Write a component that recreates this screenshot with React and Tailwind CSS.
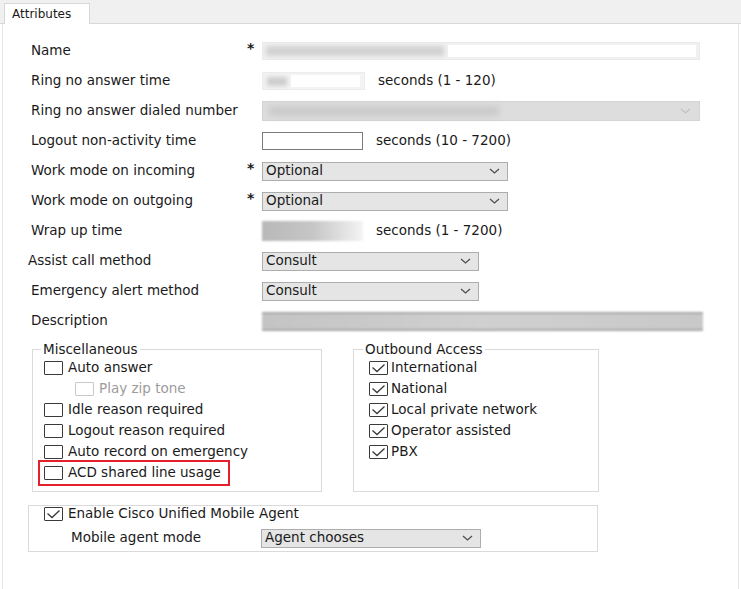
import React from "react";

const font = { fontFamily: '"DejaVu Sans", Verdana, sans-serif' };

function Chevron({ color = "#4f4f4f" }) {
  return (
    <svg width="11" height="6" viewBox="0 0 11 6" fill="none">
      <polyline points="1,1 5.5,5 10,1" stroke={color} strokeWidth="1.3" />
    </svg>
  );
}

function Select({ width, text }) {
  return (
    <div
      className="h-[19px] bg-[#e5e5e5] border border-[#adadad] flex items-center justify-between pl-[3px] pr-[7px]"
      style={{ width }}
    >
      <span className="leading-none">{text}</span>
      <Chevron />
    </div>
  );
}

function Checkbox({ checked, disabled }) {
  return (
    <span
      className={
        "w-[19px] h-[14px] shrink-0 border rounded-[1px] bg-white flex items-center justify-center " +
        (disabled ? "border-[#c9c9c9]" : "border-[#3a3a3a]")
      }
    >
      {checked && (
        <svg width="15" height="10" viewBox="0 0 15 10" fill="none">
          <polyline points="1.5,4.5 6,8.5 13.5,1.5" stroke="#3a3a3a" strokeWidth="1.3" />
        </svg>
      )}
    </span>
  );
}

function CheckRow({ label, checked, disabled, className = "", gap = "gap-[5px]" }) {
  return (
    <div className={"h-[21px] flex items-center " + gap + " " + className}>
      <Checkbox checked={checked} disabled={disabled} />
      <span className={"leading-none whitespace-nowrap " + (disabled ? "text-[#9b9b9b]" : "")}>{label}</span>
    </div>
  );
}

function Row({ label, star, children, labelClass = "" }) {
  return (
    <div className="h-[30px] flex items-center">
      <div className={"w-[215px] shrink-0 whitespace-nowrap leading-none " + labelClass}>{label}</div>
      <div className="w-[16px] shrink-0 pl-[1px] font-bold text-[14px] leading-none relative -top-[3px]">
        {star ? "*" : ""}
      </div>
      {children}
    </div>
  );
}

function Suffix({ children }) {
  return <span className="ml-[13px] leading-none whitespace-nowrap">{children}</span>;
}

export default function App() {
  return (
    <div
      className="w-[741px] h-[589px] bg-white overflow-hidden flex flex-col text-[13.5px] text-[#1a1a1a]"
      style={font}
    >
      {/* tab strip */}
      <div className="h-[24px] shrink-0 bg-[#f0f0f0] border-b border-[#d8d8d8] flex items-end pl-[4px]">
        <div className="h-[21px] w-[86px] bg-white border border-b-0 border-[#d8d8d8] -mb-px pl-[7px] flex items-center text-[12px] leading-none">
          Attributes
        </div>
      </div>

      <div className="flex-1 mx-[2px] border-x border-[#e6e6e6]">
        <div className="pt-[12px] pl-[28px]">
          <Row label="Name" star>
            <div className="w-[438px] h-[18px] bg-[#f1f1f1] border border-[#ebebeb] flex items-center pl-[3px] pr-[3px] gap-[4px]">
              <div className="w-[178px] h-[10px] bg-[#d2d2d2] blur-[2px]" />
              <div className="flex-1 h-[12px] bg-white" />
            </div>
          </Row>
          <Row label="Ring no answer time">
            <div className="w-[103px] h-[18px] bg-[#f3f3f3] border border-[#ececec] flex items-center pl-[4px] pr-[4px] gap-[4px]">
              <div className="w-[20px] h-[9px] bg-[#cdcdcd] blur-[2px]" />
              <div className="flex-1 h-[12px] bg-white" />
            </div>
            <Suffix>seconds (1 - 120)</Suffix>
          </Row>
          <Row label="Ring no answer dialed number">
            <div className="w-[438px] h-[20px] bg-[#dddddd] border border-[#d4d4d4] flex items-center justify-between pl-[6px] pr-[8px]">
              <div className="w-[230px] h-[10px] bg-[#cacaca] blur-[3px]" />
              <Chevron color="#c2c2c2" />
            </div>
          </Row>
          <Row label="Logout non-activity time">
            <div className="w-[101px] h-[18px] bg-white border border-[#7a7a7a]" />
            <Suffix>seconds (10 - 7200)</Suffix>
          </Row>
          <Row label="Work mode on incoming" star>
            <Select width={246} text="Optional" />
          </Row>
          <Row label="Work mode on outgoing" star>
            <Select width={246} text="Optional" />
          </Row>
          <Row label="Wrap up time">
            <div className="w-[101px] h-[20px] bg-gradient-to-r from-[#b8b8b8] via-[#c6c6c6] to-[#f4f4f4] blur-[1px]" />
            <Suffix>seconds (1 - 7200)</Suffix>
          </Row>
          <Row label="Assist call method" labelClass="-ml-[3px] mr-[3px]">
            <Select width={217} text="Consult" />
          </Row>
          <Row label="Emergency alert method">
            <Select width={217} text="Consult" />
          </Row>
          <Row label="Description">
            <div className="w-[441px] h-[19px] bg-gradient-to-r from-[#c4c4c4] via-[#d0d0d0] to-[#c9c9c9] border-y-2 border-[#a9a9a9] blur-[1px]" />
          </Row>
        </div>

        {/* group boxes */}
        <div className="flex mt-[5px] ml-[29px] gap-[31px]">
          <fieldset className="w-[290px] h-[151px] border border-[#dadada]">
            <legend className="ml-[8px] px-[2px] leading-[16px]">Miscellaneous</legend>
            <div className="pl-[11px]">
              <CheckRow label="Auto answer" />
              <CheckRow label="Play zip tone" disabled className="ml-[31px] gap-[4px]" />
              <CheckRow label="Idle reason required" />
              <CheckRow label="Logout reason required" />
              <CheckRow label="Auto record on emergency" />
              <div className="relative">
                <CheckRow label="ACD shared line usage" />
                <div className="absolute -left-[6px] -top-[2px] w-[192px] h-[26px] border-2 border-[#e3202b]" />
              </div>
            </div>
          </fieldset>
          <fieldset className="w-[246px] h-[151px] border border-[#dadada]">
            <legend className="ml-[9px] px-[2px] leading-[16px]">Outbound Access</legend>
            <div className="pl-[15px]">
              <CheckRow label="International" checked gap="gap-[3px]" />
              <CheckRow label="National" checked gap="gap-[3px]" />
              <CheckRow label="Local private network" checked gap="gap-[3px]" />
              <CheckRow label="Operator assisted" checked gap="gap-[3px]" />
              <CheckRow label="PBX" checked gap="gap-[3px]" />
            </div>
          </fieldset>
        </div>

        {/* mobile agent */}
        <div className="mt-[13px] ml-[25px] w-[570px] h-[47px] border border-[#dadada] pl-[15px]">
          <div className="h-[16px] flex items-center gap-[5px]">
            <Checkbox checked />
            <span className="leading-none">Enable Cisco Unified Mobile Agent</span>
          </div>
          <div className="mt-[6px] h-[20px] flex items-center">
            <span className="ml-[27px] w-[190px] leading-none whitespace-nowrap">Mobile agent mode</span>
            <Select width={220} text="Agent chooses" />
          </div>
        </div>
      </div>
    </div>
  );
}
